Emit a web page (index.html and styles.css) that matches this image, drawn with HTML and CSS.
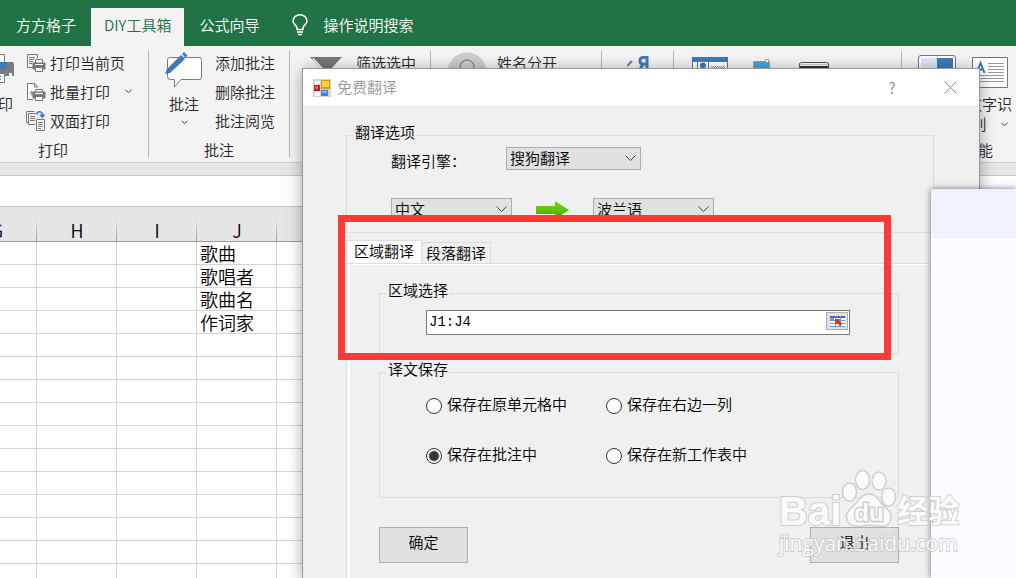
FILE: index.html
```html
<!DOCTYPE html>
<html lang="zh-CN">
<head>
  <meta charset="UTF-8">
  <title>免费翻译</title>
  <meta name="viewport" content="width=device-width, initial-scale=1.0">
  <link rel="stylesheet" href="styles.css">
</head>
<body>

  <nav class="tabs">
    <a href="#" class="tab">方方格子</a>
    <a href="#" class="tab active">DIY工具箱</a>
    <a href="#" class="tab">公式向导</a>
    <a href="#" class="tell-me">
      <svg width="16" height="22" viewBox="0 0 16 22" fill="none" stroke="#fff" stroke-width="1.5">
        <path d="M5 15.500V14C5 11.500 1 10.500 1 7a7 6.200 0 0 1 14 0c0 3.500-4 4.500-4 7v1.500z"/>
        <path d="M5 18h6M6 20.500h4"/>
      </svg>
      操作说明搜索
    </a>
  </nav>

  <div class="ribbon">
    <div class="group group-print">
      <div class="tools">
        <button class="big">
          <svg width="32" height="34" viewBox="0 0 32 34">
            <path d="M4 12h27l1 2v12H1V15z" fill="#7a7a7a"/>
            <path d="M8.500 4.500h14v12h-14z" fill="#fff" stroke="#7a7a7a"/>
            <path d="M6 12h19v7H6z" fill="#3f7ab8"/>
            <path d="M8.500 23.500h14v9h-14z" fill="#fff" stroke="#7a7a7a"/>
            <path d="M11 26.500h8M11 29.500h8" stroke="#3f7ab8"/>
            <path d="M27 23h3v3h-3z" fill="#fff"/>
          </svg>
          <span>打印</span>
        </button>
        <div class="small-list">
          <button class="small">
            <svg width="20" height="20" viewBox="0 0 20 20" fill="none" stroke="#767676">
              <path d="M7 14.500H1.500v-13h10V5"/>
              <path d="M3 4.500h6M3 6.500h5M3 8.500h4M3 10.500h3"/>
              <path d="M9.500 10V6.500h7V10" fill="#fff"/>
              <path d="M7 10h12v6H7z" fill="#767676"/>
              <path d="M9 11.500h8" stroke="#fff"/>
              <path d="M9.500 14.500h7v4h-7z" fill="#fff"/>
            </svg>
            打印当前页
          </button>
          <button class="small">
            <svg width="20" height="20" viewBox="0 0 20 20" fill="none" stroke="#767676">
              <path d="M7 17.500H1.500v-16h7L12 5" fill="#fff"/>
              <path d="M8.500 1.500V5H12M4 12l2-3v5"/>
              <path d="M9.500 10V7.500h7V10" fill="#fff"/>
              <path d="M7 10h12v6H7z" fill="#767676"/>
              <path d="M9 11.500h8" stroke="#fff"/>
              <path d="M9.500 14.500h7v4h-7z" fill="#fff"/>
            </svg>
            批量打印
            <svg class="caret" width="7" height="5" viewBox="0 0 7 5"><path d="M0.500 1l3 2.500 3-2.500"/></svg>
          </button>
          <button class="small">
            <svg width="20" height="20" viewBox="0 0 20 20" fill="none" stroke="#767676">
              <path d="M3 11.500H.5V.5h8"/>
              <path d="M9 13.500H2.500v-11h7"/>
              <path d="M4 5.500h5M4 7.500h5M4 9.500h5"/>
              <path d="M10.500 8.500h8v11h-8z" fill="#fff"/>
              <path d="M12 11.500h5M12 13.500h5M12 15.500h5M12 17.500h3"/>
              <path d="M10.500 3.500c1-4 6-3.500 6 1" stroke="#3f7ab8" stroke-width="1.500"/>
              <path d="M13 3.500h6.500L16.500 7.500z" fill="#3f7ab8" stroke="none"/>
            </svg>
            双面打印
          </button>
        </div>
      </div>
      <div class="group-name name-print">打印</div>
    </div>
    <span class="sep"></span>

    <div class="group group-note">
      <div class="tools">
        <button class="big">
          <svg width="38" height="38" viewBox="0 -2 38 38">
            <path d="M5.500 5.500h29q2 0 2 2v18q0 2-2 2H16l-6.500 7.500v-7.500h-4q-3 0-3-3V7.500q0-2 3-2z" fill="#fff" stroke="#7a7a7a"/>
            <path d="M0 22l2-5L16 3l4 4L5 21z" fill="#3f7ab8"/>
            <path d="M17 2l2-2 3.500 3.500-2 2z" fill="#3f7ab8"/>
          </svg>
          <span>批注</span>
          <svg class="caret" width="7" height="5" viewBox="0 0 7 5"><path d="M0.500 1l3 2.500 3-2.500"/></svg>
        </button>
        <div class="small-list">
          <button class="small">添加批注</button>
          <button class="small">删除批注</button>
          <button class="small">批注阅览</button>
        </div>
      </div>
      <div class="group-name">批注</div>
    </div>
    <span class="sep"></span>

    <div class="group group-filter">
      <div class="tools">
        <svg width="32" height="34" viewBox="0 0 32 34">
          <path d="M0 7h32L19 21v10l-6-4v-6z" fill="#767676"/>
          <path d="M3 8.500l11 12" stroke="#fff" stroke-width="1.500"/>
        </svg>
        <div class="small-list"><button class="small">筛选选中</button></div>
      </div>
    </div>
    <span class="sep"></span>

    <div class="group group-name-split">
      <div class="tools">
        <svg width="40" height="40" viewBox="0 0 40 40">
          <circle cx="20" cy="22" r="19.500" fill="#cdcdcd"/>
          <circle cx="20" cy="17" r="7" fill="none" stroke="#6a6a6a"/>
        </svg>
        <div class="small-list"><button class="small">姓名分开</button></div>
      </div>
    </div>
    <span class="sep"></span>

    <div class="group group-mirror">
      <svg width="26" height="30" viewBox="0 0 26 30" fill="none">
        <path d="M0 16l5-5" stroke="#9567b5" stroke-width="2"/>
        <path d="M20 22V7.500h-4c-4 0-4 6.500 0 6.500h4M16 14l-4 7" stroke="#3f7ab8" stroke-width="3"/>
      </svg>
    </div>
    <span class="sep"></span>

    <div class="group group-pictures">
      <svg width="140" height="30" viewBox="0 0 140 30">
        <path d="M.5 7.500h35v20H.5z" fill="#fff" stroke="#3f7ab8"/>
        <path d="M0 7h36v5H0z" fill="#3f7ab8"/>
        <path d="M5.500 11.500h11v16h-11z" fill="#fff" stroke="#767676"/>
        <circle cx="11" cy="15.500" r="3" fill="#3f7ab8"/>
        <path d="M19 16.500h14M20 17.500h14" stroke="#888" stroke-dasharray="1 1"/>
        <path d="M61.500 11.500h16v16h-16z" fill="#41a5e0" stroke="#89a5a3"/>
        <path d="M73.500 9.500h3v3h-3z" fill="#fff" stroke="#89a5a3"/>
        <path d="M107.500 27V14q0-1.500 2-1.500h25q2 0 2 1.500v13" fill="#fff" stroke="#555"/>
        <path d="M108 14.500h28" stroke="#ccc"/>
        <path d="M108 16h28v10h-28z" fill="#333"/>
      </svg>
    </div>
    <span class="sep"></span>

    <div class="group group-ocr">
      <div class="tools">
        <svg width="40" height="34" viewBox="0 0 40 34">
          <path d="M1.500 30V8q0-2.500 2.500-2.500h32q2.500 0 2.500 2.500v22z" fill="#fff" stroke="#767676"/>
          <path d="M4 8h16v21H4z" fill="#dbe6f3"/>
          <path d="M20 8h16v21H20z" fill="#3f7ab8"/>
        </svg>
        <button class="big">
          <svg width="36" height="38" viewBox="0 0 36 38" fill="none">
            <path d="M.5 7.500h35v30H.5z" fill="#fff" stroke="#767676"/>
            <path d="M4.500 23L8.500 13l4 10M5.500 19.500h6" stroke="#3f7ab8" stroke-width="2"/>
            <path d="M16 13.500h16M16 16.500h16M16 19.500h16M16 22.500h16M4 25.500h28M4 28.500h28M4 31.500h28" stroke="#999"/>
          </svg>
          <span>文字识</span>
          <span class="second-line">别 <svg class="caret" width="7" height="5" viewBox="0 0 7 5"><path d="M0.500 1l3 2.500 3-2.500"/></svg></span>
        </button>
      </div>
      <div class="group-name">功能</div>
    </div>
  </div>
  <div class="strip"></div>
  <div class="formula-bar"></div>

  <table class="sheet">
    <thead>
      <tr><th>G</th><th>H</th><th>I</th><th>J</th><th>K</th></tr>
    </thead>
    <tbody>
      <tr><td></td><td></td><td></td><td>歌曲</td><td></td></tr>
      <tr><td></td><td></td><td></td><td>歌唱者</td><td></td></tr>
      <tr><td></td><td></td><td></td><td>歌曲名</td><td></td></tr>
      <tr><td></td><td></td><td></td><td>作词家</td><td></td></tr>
      <tr><td></td><td></td><td></td><td></td><td></td></tr>
      <tr><td></td><td></td><td></td><td></td><td></td></tr>
      <tr><td></td><td></td><td></td><td></td><td></td></tr>
      <tr><td></td><td></td><td></td><td></td><td></td></tr>
      <tr><td></td><td></td><td></td><td></td><td></td></tr>
      <tr><td></td><td></td><td></td><td></td><td></td></tr>
      <tr><td></td><td></td><td></td><td></td><td></td></tr>
      <tr><td></td><td></td><td></td><td></td><td></td></tr>
      <tr><td></td><td></td><td></td><td></td><td></td></tr>
      <tr><td></td><td></td><td></td><td></td><td></td></tr>
      <tr><td></td><td></td><td></td><td></td><td></td></tr>
    </tbody>
  </table>

  <form class="dialog">
    <div class="title-bar">
      <svg width="18" height="18" viewBox="0 0 18 18">
        <path d="M0 0h18v18H0z" fill="#d4d4d4"/>
        <path d="M2 2h5v3H2zM2 13h5v4H2z" fill="#fff"/>
        <path d="M1 6h6v6H1z" fill="#b52a1f"/>
        <path d="M2 7h3v3H2z" fill="#e0604e"/>
        <path d="M8 1h9v9H8z" fill="#d99a11"/>
        <path d="M9 2h7v6H9z" fill="#fbce45"/>
        <path d="M8 11h7v6H8z" fill="#3f7be0"/>
        <path d="M9 12h5v2H9z" fill="#82b0fa"/>
      </svg>
      <span class="title">免费翻译</span>
      <button type="button" class="win-btn" aria-label="帮助">?</button>
      <button type="button" class="win-btn" aria-label="关闭">
        <svg width="13" height="13" viewBox="0 0 13 13" stroke="#888" fill="none"><path d="M.5.5l12 12M12.500.5l-12 12"/></svg>
      </button>
    </div>

    <div class="dialog-body">
      <fieldset>
        <legend>翻译选项</legend>
        <div class="options">
          <div class="row">
            <label class="engine-label" for="engine">翻译引擎：</label>
            <span class="select engine">
              <select id="engine"><option>搜狗翻译</option></select>
              <svg width="11" height="7" viewBox="0 0 11 7"><path d="M.5.5l5 5 5-5"/></svg>
            </span>
          </div>
          <div class="row">
            <span class="select lang">
              <select aria-label="源语言"><option>中文</option></select>
              <svg width="11" height="7" viewBox="0 0 11 7"><path d="M.5.5l5 5 5-5"/></svg>
            </span>
            <span class="arrow">
              <svg width="33" height="18" viewBox="0 0 33 18">
                <defs>
                  <linearGradient id="green" x2="0" y2="1">
                    <stop offset="0" stop-color="#7cc828"/>
                    <stop offset="0.5" stop-color="#5cc800"/>
                    <stop offset="1" stop-color="#3f9800"/>
                  </linearGradient>
                </defs>
                <path d="M0 5h19V0l14 9-14 9v-5H0z" fill="url(#green)"/>
              </svg>
            </span>
            <span class="select lang">
              <select aria-label="目标语言"><option>波兰语</option></select>
              <svg width="11" height="7" viewBox="0 0 11 7"><path d="M.5.5l5 5 5-5"/></svg>
            </span>
          </div>
        </div>
      </fieldset>

      <div class="page-tabs">
        <button type="button" class="page-tab current">区域翻译</button>
        <button type="button" class="page-tab">段落翻译</button>
      </div>

      <div class="panel">
        <fieldset>
          <legend>区域选择</legend>
          <div class="range">
            <div class="range-box">
              <input type="text" value="J1:J4" aria-label="区域选择">
              <button type="button" class="pick" aria-label="选择区域">
                <svg width="15" height="11" viewBox="0 0 15 11">
                  <path d="M0 0h15v11H0z" fill="#fff"/>
                  <path d="M0 0h15v2H0z" fill="#3d66c4"/>
                  <path d="M0 4.500h15M0 7.500h15M0 10.500h15M5.500 0v11M10.500 0v11" stroke="#6f95dc"/>
                  <path d="M0 3h4" stroke="#333"/>
                  <path d="M5 3h5L9 4.500l3 3L10 10 7 7 5 8z" fill="#d8341c"/>
                </svg>
              </button>
            </div>
          </div>
        </fieldset>

        <fieldset class="save">
          <legend>译文保存</legend>
          <div class="choices">
            <label><input type="radio" name="save">保存在原单元格中</label>
            <label><input type="radio" name="save">保存在右边一列</label>
            <label><input type="radio" name="save" checked>保存在批注中</label>
            <label><input type="radio" name="save">保存在新工作表中</label>
          </div>
        </fieldset>

        <div class="actions">
          <button type="button">确定</button>
          <button type="button">退出</button>
        </div>
      </div>
    </div>
  </form>

  <div class="side-window"><div class="side-head"></div></div>

  <div class="highlight"></div>

  <div class="watermark">
    <div class="brand">
      <span class="bai">Bai</span>
      <svg width="56" height="60" viewBox="0 0 56 60">
        <g fill="#fff" stroke="#c4c4c4" stroke-width="1.500">
          <ellipse cx="8.500" cy="23" rx="7" ry="9"/>
          <ellipse cx="21.500" cy="11" rx="7" ry="9.500"/>
          <ellipse cx="38" cy="12" rx="7" ry="9"/>
          <ellipse cx="47.500" cy="28" rx="7" ry="9"/>
          <path d="M28 25c7 0 9 6 13 10 5 5 10 8 9 14-1 8-8 9-14 8-5-1-11-1-16 0-7 1-14-1-14.500-9-.5-6 5-9 9-13 4-4 6-10 13.500-10z"/>
        </g>
        <text class="du" x="28" y="52" text-anchor="middle">du</text>
      </svg>
      <span class="jingyan">经验</span>
    </div>
    <div class="site">jingyan.baidu.com</div>
  </div>

</body>
</html>
```
FILE: styles.css
```css
:root {
  --green: #217346;
  --ribbon: #f3f3f3;
  --face: #f0f0f0;
  --line: #dcdcdc;
}

* {
  box-sizing: border-box;
}

body {
  margin: 0;
  height: 100vh;
  overflow: hidden;
  position: relative;
  background: white;
  color: #262626;
  font-family: "Noto Sans CJK SC", sans-serif;
  font-size: 15px;
  font-weight: 350;
  line-height: 20px;
}

button, input, select {
  font: inherit;
  color: inherit;
  margin: 0;
}

svg {
  display: block;
  flex-shrink: 0;
}

/* tab strip */
.tabs {
  display: flex;
  align-items: flex-end;
  gap: 2px;
  height: 46px;
  padding-left: 3px;
  background: var(--green);
}

.tab, .tell-me {
  display: flex;
  align-items: center;
  height: 38px;
  padding: 0 13px 4px;
  color: white;
  text-decoration: none;
}

.tab.active {
  background: var(--ribbon);
  color: var(--green);
}

.tell-me {
  gap: 15px;
  padding-left: 18px;
}

/* ribbon */
.ribbon {
  display: flex;
  height: 117px;
  padding-top: 2px;
  overflow: hidden;
  background: var(--ribbon);
  border-bottom: 1px solid #d0d0d0;
}

.group {
  flex-shrink: 0;
}

.group > svg, .tools > svg, .big > svg:first-child {
  margin-top: 2px;
}

.group-print {
  width: 190px;
  margin-left: -42px;
  padding-left: 24px;
}

.group-note {
  width: 140px;
}

.group-note .tools {
  padding-left: 16px;
}

.group-filter {
  width: 140px;
  padding-left: 20px;
}

.group-filter .tools {
  gap: 14px;
}

.group-name-split {
  width: 170px;
  padding-left: 16px;
}

.group-name-split .tools {
  gap: 10px;
}

.group-mirror {
  width: 71px;
  padding-left: 25px;
}

.group-pictures {
  width: 227px;
  padding-left: 18px;
}

.group-ocr {
  width: 152px;
}

.group-ocr .tools {
  padding-left: 15px;
  gap: 10px;
}

.sep {
  width: 1px;
  height: 106px;
  margin-top: 3px;
  background: #b5b5b5;
  flex-shrink: 0;
}

.tools {
  display: flex;
  gap: 12px;
  height: 87px;
}

.big, .small {
  display: flex;
  padding: 0;
  border: none;
  background: none;
}

.big {
  flex-direction: column;
  align-items: center;
  white-space: nowrap;
}

.group-print .big {
  width: 32px;
}

.big span {
  margin-top: 6px;
}

.group-print .big span {
  margin-top: 10px;
}

.big span.second-line {
  display: flex;
  align-items: center;
  gap: 14px;
  margin-top: 0;
}

.big > .caret {
  margin-top: 6px;
}

.small {
  align-items: center;
  gap: 4px;
  height: 29px;
}

.caret {
  fill: none;
  stroke: #444;
}

.small .caret {
  margin-left: 11px;
}

.group-name {
  padding-top: 5px;
  text-align: center;
}

.name-print {
  margin-left: -24px;
}

.strip {
  height: 13px;
  background: #e6e6e6;
  border-bottom: 1px solid #c6c6c6;
}

.formula-bar {
  height: 31px;
  background: #fdfdfd;
  border-bottom: 1px solid #c6c6c6;
}

/* worksheet */
.sheet {
  width: 400px;
  margin-left: -43px;
  table-layout: fixed;
  border-collapse: separate;
  border-spacing: 0;
  color: black;
  font-size: 18px;
}

.sheet th {
  height: 35px;
  padding: 11px 0 0;
  font-weight: 350;
  border-bottom: 1px solid #999;
  background: linear-gradient(#e6e6e6, #999) right bottom / 1px 23px no-repeat #e6e6e6;
}

.sheet td {
  height: 23px;
  padding: 0 3px;
  line-height: 22px;
  border-right: 1px solid #d4d4d4;
  border-bottom: 1px solid #d4d4d4;
}

/* dialog window */
.dialog {
  position: absolute;
  left: 302px;
  right: 36px;
  top: 68px;
  bottom: 0;
  display: flex;
  flex-direction: column;
  background: var(--face);
  border: 1px solid #999;
  border-bottom: none;
  box-shadow: 0 2px 14px rgba(0, 0, 0, 0.35);
  color: black;
}

.title-bar {
  display: flex;
  align-items: center;
  height: 37px;
  padding-left: 10px;
  background: white;
  color: #999;
}

.title {
  flex: 1;
  padding: 0 0 2px 6px;
}

.win-btn {
  display: flex;
  align-items: center;
  justify-content: center;
  width: 58px;
  height: 36px;
  padding: 0;
  border: none;
  background: none;
  color: #888;
}

.dialog-body {
  flex: 1;
  display: flex;
  flex-direction: column;
  padding: 19px 45px 0 43px;
}

fieldset {
  margin: 0;
  padding: 0 6px;
  border: 1px solid var(--line);
}

legend {
  padding: 0 2px 6px;
  line-height: 14px;
}

.options {
  display: flex;
  flex-direction: column;
  gap: 27px;
  padding: 2px 0 11px 38px;
}

.row {
  display: flex;
}

.engine-label {
  width: 115px;
  padding-top: 4px;
}

.select {
  display: grid;
  align-items: center;
  height: 23px;
}

.select select, .select svg {
  grid-area: 1 / 1;
}

.select select {
  appearance: none;
  width: 100%;
  height: 23px;
  padding: 0 3px 3px;
  border: 1px solid #adadad;
  border-radius: 0;
  background: #e1e1e1;
}

.select svg {
  justify-self: end;
  margin-right: 5px;
  fill: none;
  stroke: #444;
  pointer-events: none;
}

.engine {
  width: 135px;
}

.lang {
  width: 121px;
}

.arrow {
  display: flex;
  align-items: center;
  justify-content: center;
  width: 81px;
}

.page-tabs {
  display: flex;
  align-items: flex-end;
  margin-top: 7px;
}

.page-tab {
  height: 21px;
  padding: 0 4px 2px;
  border: 1px solid var(--line);
  border-left: none;
  border-bottom: none;
  background: var(--face);
}

.page-tab.current {
  height: 23px;
  padding: 0 7px 3px;
  border-left: 1px solid var(--line);
  background: white;
}

.panel {
  flex: 1;
  padding: 19px 35px 0 32px;
  border-top: 1px solid var(--line);
  border-left: 1px solid var(--line);
  box-shadow: inset 3px 1px 0 white;
}

.range {
  padding: 7px 42px 18px 40px;
}

.range-box {
  display: flex;
  height: 25px;
  padding: 1px;
  border: 1px solid #7a7a7a;
  background: white;
}

.range-box input {
  flex: 1;
  min-width: 0;
  padding: 0 1px 2px;
  border: none;
  outline: none;
  background: none;
  font-family: "Liberation Mono", monospace;
  font-size: 14px;
}

.pick {
  display: flex;
  align-items: center;
  justify-content: center;
  width: 22px;
  height: 18px;
  padding: 0;
  border: 1px solid #adadad;
  background: #e1e1e1;
}

.save {
  margin-top: 8px;
}

.choices {
  display: grid;
  grid-template-columns: 180px 1fr;
  row-gap: 30px;
  padding: 13px 0 32px 40px;
}

.choices label {
  display: flex;
  gap: 5px;
  height: 20px;
  line-height: 18px;
}

.choices input {
  appearance: none;
  width: 16px;
  height: 16px;
  margin-top: 3px;
  border: 1px solid #333;
  border-radius: 50%;
  background: white;
}

.choices input:checked {
  background: radial-gradient(circle, #333 0 4px, white 6px);
}

.actions {
  display: flex;
  justify-content: space-between;
  margin-top: 29px;
}

.actions button {
  width: 89px;
  height: 36px;
  padding: 0 0 6px;
  border: 1px solid #adadad;
  background: #e1e1e1;
}

/* window to the right */
.side-window {
  position: absolute;
  left: 931px;
  right: 0;
  top: 189px;
  bottom: 0;
  background: #fbfcff;
  border-radius: 3px 0 0 0;
  box-shadow: 0 0 6px rgba(0, 0, 0, 0.55);
}

.side-head {
  height: 49px;
  background: #eff1fe;
  border-radius: 3px 0 0 0;
}

.highlight {
  position: absolute;
  left: 338px;
  top: 215px;
  width: 553px;
  height: 145px;
  border: 7px solid #fc3838;
}

/* watermark */
.watermark {
  position: absolute;
  left: 779px;
  top: 469px;
  opacity: 0.75;
  color: white;
  pointer-events: none;
}

.brand {
  display: flex;
  align-items: flex-end;
  height: 60px;
}

.bai, .jingyan, .site {
  -webkit-text-stroke: 2px #c4c4c4;
  paint-order: stroke fill;
}

.bai {
  font: bold 40px/36px "Liberation Sans", sans-serif;
}

.jingyan {
  font-size: 31px;
  font-weight: bold;
  line-height: 40px;
}

.du {
  font: bold 24px "Liberation Sans", sans-serif;
  fill: white;
  stroke: #c4c4c4;
  stroke-width: 3px;
  paint-order: stroke fill;
}

.site {
  font: 21px/28px "Open Sans", sans-serif;
}
```
